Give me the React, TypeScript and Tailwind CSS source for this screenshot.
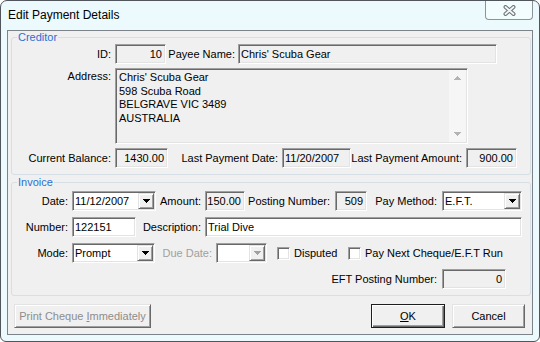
import React from "react";

const sunken =
  "border border-t-[#a0a0a0] border-l-[#a0a0a0] border-r-white border-b-white shadow-[inset_1px_1px_0_#696969,inset_-1px_-1px_0_#e3e3e3]";
const raised =
  "border border-t-[#e3e3e3] border-l-[#e3e3e3] border-r-[#696969] border-b-[#696969] shadow-[inset_1px_1px_0_#ffffff,inset_-1px_-1px_0_#a0a0a0]";

function Arrow({ color = "#000" }: { color?: string }) {
  return (
    <svg width="7" height="4" viewBox="0 0 7 4" shapeRendering="crispEdges">
      <path d="M0 0h7v1H0zM1 1h5v1H1zM2 2h3v1H2zM3 3h1v1H3z" fill={color} />
    </svg>
  );
}

function UpArrow({ color = "#000" }: { color?: string }) {
  return (
    <svg width="7" height="4" viewBox="0 0 7 4" shapeRendering="crispEdges">
      <path d="M3 0h1v1H3zM2 1h3v1H2zM1 2h5v1H1zM0 3h7v1H0z" fill={color} />
    </svg>
  );
}

function Combo({
  className,
  value,
  disabled,
}: {
  className: string;
  value?: string;
  disabled?: boolean;
}) {
  return (
    <div className={`${sunken} ${className} flex h-[20px] shrink-0 bg-white p-[1px]`}>
      <div className="flex-1 overflow-hidden whitespace-nowrap pl-[1px] leading-[16px]">{value}</div>
      <div className={`${raised} flex h-[16px] w-[16px] shrink-0 items-center justify-center bg-[#f0f0f0]`}>
        <Arrow color={disabled ? "#a0a0a0" : "#000"} />
      </div>
    </div>
  );
}

function Checkbox() {
  return <div className={`${sunken} h-[13px] w-[13px] shrink-0 bg-white`} />;
}

export default function App() {
  return (
    <div className="h-[342px] w-[540px] font-['Liberation_Sans',Arial,sans-serif] text-[11px] leading-[14px] text-black">
      <div className="flex h-full w-full flex-col rounded-t-[7px] rounded-b-[6px] border border-[#50565b] bg-[#ecfafd]">
        {/* Title bar */}
        <div className="flex h-[29px] shrink-0 items-start">
          <div className="ml-[7px] mt-[7px] text-[12px] leading-[15px]">Edit Payment Details</div>
          <div className="ml-auto mr-[6px] flex h-[19px] w-[48px] items-center justify-center rounded-b-[4px] border border-t-0 border-[#8b9398] bg-[#f3fdfe]">
            <svg width="13" height="11" viewBox="0 0 13 11">
              <path d="M2.5 2 L10.5 9 M10.5 2 L2.5 9" stroke="#6f767b" strokeWidth="4" strokeLinecap="round" />
              <path d="M2.5 2 L10.5 9 M10.5 2 L2.5 9" stroke="#f4f6f7" strokeWidth="1.8" strokeLinecap="round" />
            </svg>
          </div>
        </div>

        {/* Client area */}
        <div className="mx-[6px] h-[305px] shrink-0 border border-[#7d8489] bg-[#f0f0f0]">
          {/* Creditor group */}
          <fieldset className="ml-[3px] w-[520px] rounded-[3px] border border-[#d5dfe5] pb-[6px]">
            <legend className="ml-[5px] px-[1px] leading-[13px] text-[#2b6fd6]">Creditor</legend>
            <div className="flex h-[20px] items-center">
              <div className="w-[103px] shrink-0 whitespace-nowrap pr-[4px] text-right">ID:</div>
              <div className={`${sunken} h-[20px] w-[51px] shrink-0 pr-[3px] text-right leading-[18px]`}>10</div>
              <div className="w-[72px] shrink-0 whitespace-nowrap pr-[3px] text-right">Payee Name:</div>
              <div className={`${sunken} h-[20px] w-[259px] shrink-0 pl-[2px] leading-[18px]`}>Chris' Scuba Gear</div>
            </div>
            <div className="mt-[4px] flex h-[76px] items-start">
              <div className="w-[103px] shrink-0 whitespace-nowrap pr-[4px] pt-[2px] text-right leading-[13px]">Address:</div>
              <div className={`${sunken} flex h-[76px] w-[353px] shrink-0 p-[1px]`}>
                <div className="flex-1 pl-[2px] pt-[1px] leading-[13.5px]">
                  <div>Chris' Scuba Gear</div>
                  <div>598 Scuba Road</div>
                  <div>BELGRAVE VIC 3489</div>
                  <div>AUSTRALIA</div>
                </div>
                <div className="flex w-[17px] shrink-0 flex-col items-center justify-between bg-[#f6f6f6] py-[6px]">
                  <UpArrow color="#b4b4b4" />
                  <Arrow color="#b4b4b4" />
                </div>
              </div>
            </div>
            <div className="mt-[4px] flex h-[20px] items-center">
              <div className="w-[103px] shrink-0 whitespace-nowrap pr-[4px] text-right">Current Balance:</div>
              <div className={`${sunken} h-[20px] w-[53px] shrink-0 pr-[3px] text-right leading-[18px]`}>1430.00</div>
              <div className="w-[114px] shrink-0 whitespace-nowrap pr-[4px] text-right">Last Payment Date:</div>
              <div className={`${sunken} h-[20px] w-[69px] shrink-0 pl-[2px] leading-[18px]`}>11/20/2007</div>
              <div className="w-[115px] shrink-0 whitespace-nowrap pr-[4px] text-right">Last Payment Amount:</div>
              <div className={`${sunken} h-[20px] w-[51px] shrink-0 pr-[3px] text-right leading-[18px]`}>900.00</div>
            </div>
          </fieldset>

          {/* Invoice group */}
          <fieldset className="ml-[3px] mt-[1px] w-[520px] rounded-[3px] border border-[#d5dfe5] pb-[6px]">
            <legend className="ml-[5px] px-[1px] leading-[13px] text-[#2b6fd6]">Invoice</legend>
            <div className="mt-[2px] flex h-[20px] items-center">
              <div className="w-[60px] shrink-0 whitespace-nowrap pr-[4px] text-right">Date:</div>
              <Combo className="w-[84px]" value="11/12/2007" />
              <div className="w-[49px] shrink-0 whitespace-nowrap pr-[4px] text-right">Amount:</div>
              <div className={`${sunken} h-[20px] w-[40px] shrink-0 pr-[3px] text-right leading-[18px]`}>150.00</div>
              <div className="w-[90px] shrink-0 whitespace-nowrap pr-[5px] text-right">Posting Number:</div>
              <div className={`${sunken} h-[20px] w-[32px] shrink-0 pr-[3px] text-right leading-[18px]`}>509</div>
              <div className="w-[75px] shrink-0 whitespace-nowrap pr-[5px] text-right">Pay Method:</div>
              <Combo className="w-[80px]" value="E.F.T." />
            </div>
            <div className="mt-[6px] flex h-[20px] items-center">
              <div className="w-[60px] shrink-0 whitespace-nowrap pr-[4px] text-right">Number:</div>
              <div className={`${sunken} h-[20px] w-[64px] shrink-0 bg-white pl-[2px] leading-[18px]`}>122151</div>
              <div className="w-[69px] shrink-0 whitespace-nowrap pr-[4px] text-right">Description:</div>
              <div className={`${sunken} h-[20px] w-[317px] shrink-0 bg-white pl-[2px] leading-[18px]`}>Trial Dive</div>
            </div>
            <div className="mt-[6px] flex h-[20px] items-center">
              <div className="w-[60px] shrink-0 whitespace-nowrap pr-[4px] text-right">Mode:</div>
              <Combo className="w-[83px]" value="Prompt" />
              <div className="w-[61px] shrink-0 whitespace-nowrap pr-[4px] text-right text-[#a0a0a0]">Due Date:</div>
              <Combo className="w-[51px]" disabled />
              <div className="flex w-[81px] shrink-0 items-center gap-[4px] pl-[10px]">
                <Checkbox />
                <span className="whitespace-nowrap">Disputed</span>
              </div>
              <div className="flex items-center gap-[4px]">
                <Checkbox />
                <span className="whitespace-nowrap">Pay Next Cheque/E.F.T Run</span>
              </div>
            </div>
            <div className="mt-[6px] flex h-[20px] items-center">
              <div className="w-[430px] shrink-0 whitespace-nowrap pr-[5px] text-right">EFT Posting Number:</div>
              <div className={`${sunken} h-[20px] w-[64px] shrink-0 pr-[3px] text-right leading-[18px]`}>0</div>
            </div>
          </fieldset>

          {/* Buttons */}
          <div className="mt-[8px] flex h-[24px] items-stretch">
            <div className={`${raised} ml-[6px] flex w-[137px] items-center justify-center bg-[#f0f0f0] text-[#8d8d8d]`}>
              Print Cheque <span className="ml-[3px] underline">I</span>mmediately
            </div>
            <div className="ml-auto flex w-[74px] items-center justify-center border border-[#1e1e1e] bg-[#f0f0f0] shadow-[inset_1px_1px_0_#ffffff,inset_-1px_-1px_0_#696969,inset_-2px_-2px_0_#a0a0a0]">
              <span className="underline">O</span>K
            </div>
            <div className={`${raised} ml-[7px] mr-[7px] flex w-[73px] items-center justify-center bg-[#f0f0f0]`}>
              Cancel
            </div>
          </div>
        </div>
      </div>
    </div>
  );
}
